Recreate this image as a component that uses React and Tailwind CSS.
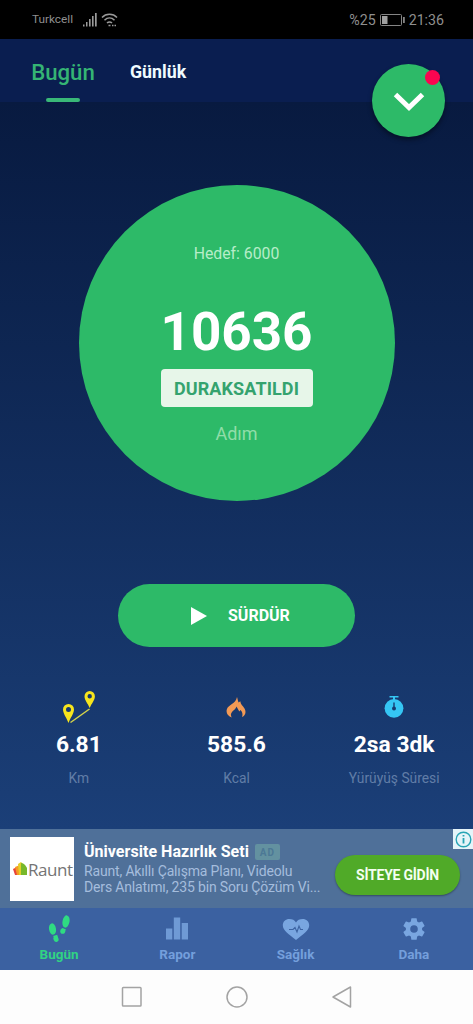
function StatusBar() {
  return (
    <div className="flex h-[39px] items-center justify-between bg-black pr-[29px] pl-8 text-[#8f8f8f]">
      <div className="flex items-center pt-px">
        <span className="w-[41px] text-[11.8px] whitespace-nowrap">Turkcell</span>
        <svg className="ml-[9px]" width="16" height="14" viewBox="0 0 16 14" fill="#9a9a9a">
          <rect x="1" y="11.5" width="1.5" height="2" />
          <rect x="4" y="9" width="1.5" height="4.5" />
          <rect x="7" y="6" width="1.6" height="7.5" />
          <rect x="10" y="3" width="1.6" height="10.5" />
          <rect x="13" y="0" width="1.7" height="13.5" />
        </svg>
        <svg className="ml-[3px]" width="17" height="14" viewBox="0 0 17 14" fill="none" stroke="#9a9a9a" strokeWidth="1.5">
          <path d="M1 4.5C5 .2 12 .2 16 4.5" />
          <path d="M3.5 7.3c3-3 7-3 10 0" />
          <path d="M6 10c1.5-1.5 3.5-1.5 5 0" />
          <path d="M7.5 12.500h2M11 12.500h1.500M13.500 12.500H15" />
        </svg>
      </div>
      <div className="flex items-center pt-0.5 text-[14.2px] leading-none">
        <span>%25</span>
        <svg className="mx-[4px]" width="25" height="12" viewBox="0 0 25 12">
          <rect x=".5" y=".5" width="21" height="11" rx="1" fill="none" stroke="#858585" />
          <rect x="2" y="2" width="5.5" height="8" fill="#a0a0a0" />
          <rect x="23" y="3" width="1.8" height="6" fill="#858585" />
        </svg>
        <span>21:36</span>
      </div>
    </div>
  );
}

function RouteIcon() {
  return (
    <svg width="34" height="34" viewBox="0 0 34 34">
      <path d="M8.500 32.500 27.500 19" stroke="#d5d34a" strokeWidth="1.500" />
      <path
        fill="#f7e51d"
        fillRule="evenodd"
        d="M6.500 14A5.500 5.500 0 0 0 1 19.500c0 4 3.700 8.500 5.500 13.500 1.800-5 5.500-9.500 5.500-13.500A5.500 5.500 0 0 0 6.500 14zm0 3a2.500 2.500 0 1 1 0 5 2.500 2.500 0 0 1 0-5z"
      />
      <path
        fill="#f7e51d"
        fillRule="evenodd"
        d="M27.700 1a5.200 5.200 0 0 0-5.200 5.200c0 4 3.500 7.300 5.200 11.800 1.700-4.500 5.200-7.800 5.200-11.800A5.200 5.200 0 0 0 27.700 1zm0 3a2.200 2.200 0 1 1 0 4.400 2.200 2.200 0 0 1 0-4.400z"
      />
    </svg>
  );
}

function FlameIcon() {
  return (
    <svg width="20" height="21" viewBox="0 0 20 21">
      <path
        fill="#f39a55"
        d="M11 0c.8 2 .6 3.500 1.600 5.500l1.700-1.200c.2 3 2.400 4.500 4.200 7.200 2 3.500.9 7.300-2.500 8.500 1-3 .3-5-1.500-7l-1.200 1.500-2.800-5c-.7 3-4.800 4.500-5.500 7.500-.3 1.300.2 2.500.8 3.500-3.500-.8-6-4.500-5-8C2 7.500 10 7 11 0z"
      />
    </svg>
  );
}

function StopwatchIcon() {
  return (
    <svg width="20" height="22" viewBox="0 0 20 22">
      <rect x="5.500" y="0" width="9" height="1.500" fill="#35c6f4" />
      <rect x="9" y="1" width="2" height="3" fill="#35c6f4" />
      <circle cx="10" cy="12.300" r="9.400" fill="#35c6f4" />
      <path d="M10 6.500v6" stroke="#173b70" strokeWidth="1.400" />
      <circle cx="10" cy="12.500" r="2" fill="#173b70" />
    </svg>
  );
}

function FootstepsIcon() {
  return (
    <svg width="24" height="28" viewBox="0 0 24 28" fill="#2fdb82">
      <ellipse cx="5.500" cy="14" rx="3.500" ry="5.700" transform="rotate(-10 5.500 14)" />
      <ellipse cx="9" cy="24" rx="2.500" ry="2.900" transform="rotate(-25 9 24)" />
      <path d="m6 21 4.200-1.200.9 3-3 1z" />
      <ellipse cx="19" cy="6.500" rx="3.500" ry="6.200" transform="rotate(10 19 6.500)" />
      <ellipse cx="15.700" cy="16.200" rx="2.400" ry="2.600" />
      <path d="m14.800 13 4 1.300-.8 3-3-.8z" />
    </svg>
  );
}

function ReportIcon() {
  return (
    <svg width="24" height="28" viewBox="0 0 24 28" fill="#6f9ad5">
      <rect x="1" y="13.500" width="6.300" height="11" />
      <rect x="8.800" y="2.500" width="6.400" height="22" />
      <rect x="16.700" y="8" width="6.300" height="16.500" />
    </svg>
  );
}

function HeartIcon() {
  return (
    <svg width="28" height="28" viewBox="0 0 28 28">
      <path
        fill="#79a6e0"
        d="M14 25C7 19.500.8 15.500.8 10.300.8 6.300 3.800 4 7.300 4 10.300 4 12.800 5 14 7.500 15.200 5 17.700 4 20.700 4c3.500 0 6.500 2.300 6.500 6.300C27.200 15.500 21 19.500 14 25z"
      />
      <path d="M7 14.500h4l2-2 2 4.500 2-6 1.500 3.500H21" fill="none" stroke="#3d64a2" strokeWidth="1.100" />
    </svg>
  );
}

function GearIcon() {
  return (
    <svg width="26" height="26" viewBox="0 0 24 24">
      <path
        fill="#79a6e0"
        d="M19.430 12.980c.04-.32.07-.64.07-.98s-.03-.66-.07-.98l2.110-1.650c.19-.15.240-.42.120-.64l-2-3.460c-.12-.22-.39-.3-.61-.22l-2.490 1c-.52-.4-1.080-.73-1.690-.98l-.38-2.650A.488.488 0 0 0 14 2h-4c-.25 0-.46.180-.49.420l-.38 2.650c-.61.250-1.170.590-1.690.980l-2.490-1c-.23-.09-.49 0-.61.220l-2 3.460c-.13.220-.07.490.120.640l2.110 1.650c-.04.320-.07.650-.07.980s.03.660.07.980l-2.110 1.650c-.19.150-.24.420-.12.640l2 3.460c.12.220.39.300.61.220l2.490-1c.52.400 1.080.730 1.690.980l.38 2.650c.03.240.24.420.49.420h4c.25 0 .46-.18.49-.42l.38-2.650c.61-.25 1.170-.59 1.690-.98l2.490 1c.23.090.49 0 .61-.22l2-3.460c.12-.22.070-.49-.12-.64l-2.110-1.650zM12 15.500A3.500 3.500 0 1 1 12 8.500a3.500 3.500 0 0 1 0 7z"
      />
    </svg>
  );
}

const stats = [
  { value: "6.81", label: "Km", icon: <RouteIcon /> },
  { value: "585.6", label: "Kcal", icon: <FlameIcon /> },
  { value: "2sa 3dk", label: "Yürüyüş Süresi", icon: <StopwatchIcon /> },
];

const navItems = [
  { label: "Bugün", icon: <FootstepsIcon />, active: true },
  { label: "Rapor", icon: <ReportIcon /> },
  { label: "Sağlık", icon: <HeartIcon /> },
  { label: "Daha", icon: <GearIcon /> },
];

function Header() {
  return (
    <header className="relative flex h-[63px] items-start bg-[#0a1e50] pl-8">
      <div className="flex w-[62px] flex-col items-center pt-[18px]">
        <span className="text-[22.2px] leading-[30px] font-medium whitespace-nowrap text-[#35b474]">Bugün</span>
        <span className="mt-[11px] h-1 w-[34px] rounded-full bg-[#39b878]" />
      </div>
      <span className="ml-[36px] pt-[21px] text-[17.8px] leading-6 font-bold text-[#f0fbff]">Günlük</span>
      <button className="absolute top-[25px] right-[28px] flex size-[73px] items-center justify-center rounded-full bg-[#2dba68] shadow-[0_3px_5px_rgba(0,0,0,0.4)]">
        <svg className="mt-[3px]" width="32" height="20" viewBox="0 0 32 20" fill="none" stroke="white" strokeWidth="5">
          <path d="M2.500 2.500 16 15.500 29.500 2.500" />
        </svg>
        <span className="absolute top-[6px] right-[5px] size-[15px] rounded-full bg-[#fb0550]" />
      </button>
    </header>
  );
}

function AdBanner() {
  return (
    <div className="relative flex h-[79px] bg-[#4f7099] pl-[10px]">
      <div className="mt-2 flex size-16 shrink-0 items-center bg-white pl-[3px]">
        <svg width="14" height="14" viewBox="0 0 14 14">
          <path d="M0 7 4 5v8H2z" fill="#e8443c" />
          <path d="M2 5 7 3v10H4z" fill="#f59a22" />
          <path d="M5 2 8 0l2 2v11H6z" fill="#e3cf29" />
          <path d="M8 1c3 0 5 3 6 5v7H8z" fill="#78b82a" />
        </svg>
        <span className="ml-px font-['Open_Sans',sans-serif] text-[17px] leading-none tracking-[-0.45px] text-[#747474]">Raunt</span>
      </div>
      <div className="ml-[10px] w-[240px] pt-[13px]">
        <div className="flex items-center">
          <span className="text-[16px] leading-5 font-bold tracking-[0.03px] whitespace-nowrap text-white">Üniversite Hazırlık Seti</span>
          <span className="ml-[6px] flex h-4 w-[25px] items-center justify-center rounded-[2px] bg-[#6391a0] text-[10px] font-bold tracking-[1px] text-[#4c7895]">AD</span>
        </div>
        <p className="mt-px text-[14px] leading-4 tracking-[-0.16px] whitespace-nowrap text-[#a5bddd]">
          Raunt, Akıllı Çalışma Planı, Videolu
          <br />
          Ders Anlatımı, 235 bin Soru Çözüm Vi...
        </p>
      </div>
      <button className="mt-[26px] ml-[11px] h-10 w-[125px] rounded-full bg-[#50aa28] text-[14px] font-bold tracking-[-0.25px] whitespace-nowrap text-[#f4fff0] shadow-[0_1px_2px_rgba(0,0,0,0.35)]">
        SİTEYE GİDİN
      </button>
      <div className="absolute top-0 right-0 flex size-5 items-center justify-center bg-[#e5f4f9]">
        <svg width="17" height="17" viewBox="0 0 17 17" fill="none" stroke="#27a4b5" strokeWidth="1.400">
          <circle cx="8.500" cy="8.500" r="7.300" />
          <path d="M8.500 7v5.500M8.500 4v1.600" strokeWidth="1.800" />
        </svg>
      </div>
    </div>
  );
}

function BottomNav() {
  return (
    <nav className="grid h-[62px] grid-cols-4 bg-[#3b61a1]">
      {navItems.map((item) => (
        <div key={item.label} className="flex flex-col items-center pt-[7px]">
          <div className="flex h-7 items-center">{item.icon}</div>
          <span
            className={
              item.active
                ? "mt-[3px] text-[13.5px] leading-4 font-bold text-[#31d383]"
                : "mt-[3px] text-[13.5px] leading-4 font-bold text-[#749fdc]"
            }
          >
            {item.label}
          </span>
        </div>
      ))}
    </nav>
  );
}

function SystemBar() {
  return (
    <div className="flex h-[54px] items-center justify-center gap-[83px] bg-[#fdfdfd]">
      <svg width="22" height="22" viewBox="0 0 22 22" fill="none" stroke="#a3a3a3" strokeWidth="1.500">
        <rect x="1.500" y="1.500" width="18.500" height="18.500" rx=".8" />
      </svg>
      <svg width="22" height="22" viewBox="0 0 22 22" fill="none" stroke="#a3a3a3" strokeWidth="1.500">
        <circle cx="11" cy="11" r="10" />
      </svg>
      <svg width="22" height="22" viewBox="0 0 22 22" fill="none" stroke="#a3a3a3" strokeWidth="1.500" strokeLinejoin="round">
        <path d="M19.500 1v20L2 11z" />
      </svg>
    </div>
  );
}

export default function App() {
  return (
    <div className="h-[1024px] w-[473px] overflow-hidden font-[Roboto,sans-serif]">
      <StatusBar />
      <Header />
      <main className="flex h-[727px] flex-col items-center bg-linear-to-b from-[#081a40] to-[#1b3f78] pt-[83px]">
        <div className="flex size-[316px] flex-col items-center rounded-full bg-[#2dba68]">
          <span className="mt-[59px] text-[15.8px] leading-5 text-[#b7edc9]">Hedef: 6000</span>
          <span className="mt-[38px] text-[53px] leading-[60px] font-bold text-white">10636</span>
          <span className="mt-[7px] flex h-[38px] w-[152px] items-center justify-center rounded bg-[#e7f6e9] text-[18px] font-bold tracking-[0.1px] text-[#35a36e]">
            DURAKSATILDI
          </span>
          <span className="mt-[17px] text-[18px] leading-5 text-[#91dda9]">Adım</span>
        </div>
        <button className="mt-[83px] flex h-[63px] w-[237px] shrink-0 items-center rounded-full bg-[#2dba68] pl-[73px] text-white">
          <svg width="16" height="18" viewBox="0 0 16 18" fill="currentColor">
            <path d="M0 0 16 9 0 18z" />
          </svg>
          <span className="ml-[21px] pt-px text-[16px] font-bold">SÜRDÜR</span>
        </button>
        <div className="mt-[43px] grid w-full grid-cols-3">
          {stats.map((stat) => (
            <div key={stat.label} className="flex flex-col items-center">
              <div className="flex h-[34px] items-center">{stat.icon}</div>
              <span className="mt-[7px] text-[22.8px] leading-7 font-bold text-white">{stat.value}</span>
              <span className="mt-[9px] text-[13.8px] leading-5 text-[#617da7]">{stat.label}</span>
            </div>
          ))}
        </div>
      </main>
      <AdBanner />
      <BottomNav />
      <SystemBar />
    </div>
  );
}
